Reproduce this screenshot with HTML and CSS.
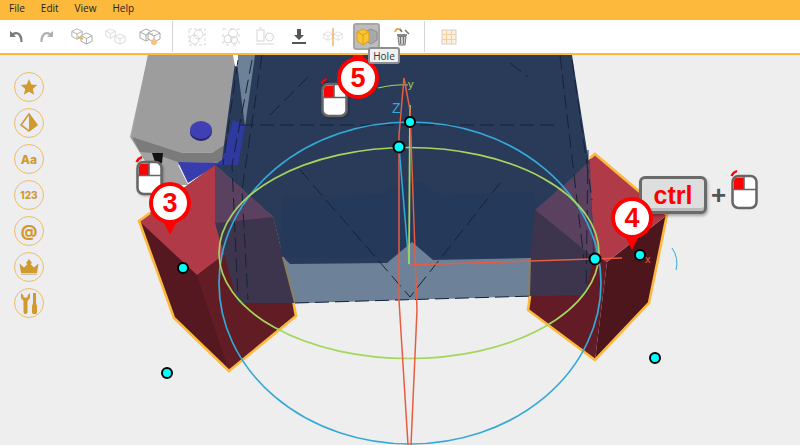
FILE: index.html
```html
<!DOCTYPE html>
<html lang="en">
<head>
    <meta charset="UTF-8">
    <meta name="viewport" content="width=device-width, initial-scale=1.0">
    <title>3D Editor</title>
    <link rel="stylesheet" href="styles.css">
</head>
<body>
    <!-- shared icons -->
    <svg class="defs" width="0" height="0">
        <symbol id="mouse" viewBox="0 0 28 40">
            <path d="M1.500 6 A9 9 0 0 1 7 1" fill="none" stroke="#f00" stroke-width="2.200"/>
            <rect x="2.500" y="6" width="24" height="32" rx="6" fill="#fff" stroke="#666" stroke-width="2.500"/>
            <path d="M4 19 V11 A4 4 0 0 1 8 7.500 H14 V19 Z" fill="#f00"/>
            <path d="M14 7 V19 M3 19.500 H26" stroke="#666" stroke-width="1.600" fill="none"/>
        </symbol>
        <symbol id="cube" viewBox="0 0 14 14">
            <path d="M1 4 L7 1 L13 4 V10 L7 13 L1 10 Z M1 4 L7 7 L13 4 M7 7 V13" fill="#fff" stroke="currentColor" stroke-width="1"/>
        </symbol>
    </svg>

    <nav class="menubar">
        <span class="menu-item">File</span>
        <span class="menu-item">Edit</span>
        <span class="menu-item">View</span>
        <span class="menu-item">Help</span>
    </nav>

    <div class="toolbar">
        <button class="tool tool-arrow">
            <svg width="18" height="18" viewBox="0 0 18 18"><path d="M3 3 V9 H9 L7 7 C10 5 13 7 13.500 14 H15.500 C16 6 11 2 5.500 5 Z" fill="#7a7a7a"/></svg>
        </button>
        <button class="tool tool-arrow">
            <svg width="18" height="18" viewBox="0 0 18 18"><path d="M15 3 V9 H9 L11 7 C8 5 5 7 4.500 14 H2.500 C2 6 7 2 12.500 5 Z" fill="#b0b0b0"/></svg>
        </button>
        <button class="tool">
            <svg class="grey" width="24" height="22" viewBox="0 0 24 22">
                <use href="#cube" x="1" y="2" width="12" height="12"/>
                <use href="#cube" x="10" y="6" width="13" height="13"/>
                <path d="M8 11 L13 13" stroke="#f3b35a" stroke-width="2"/>
            </svg>
        </button>
        <button class="tool">
            <svg class="pale" width="24" height="22" viewBox="0 0 24 22">
                <use href="#cube" x="1" y="2" width="11" height="11"/>
                <use href="#cube" x="10" y="7" width="12" height="12"/>
            </svg>
        </button>
        <button class="tool">
            <svg class="grey" width="24" height="22" viewBox="0 0 24 22">
                <use href="#cube" x="1" y="2" width="14" height="14"/>
                <use href="#cube" x="9" y="3" width="14" height="14"/>
                <circle cx="16" cy="16" r="3" fill="#f7c27c"/>
            </svg>
        </button>
        <span class="tool-sep"></span>
        <button class="tool">
            <svg class="pale" width="20" height="20" viewBox="0 0 20 20" fill="none" stroke="currentColor">
                <rect x="2" y="2" width="16" height="16" stroke-dasharray="3 2"/>
                <circle cx="11.500" cy="7.500" r="4.500"/><circle cx="7.500" cy="12.500" r="4.500"/>
            </svg>
        </button>
        <button class="tool">
            <svg class="pale" width="20" height="20" viewBox="0 0 20 20" fill="none" stroke="currentColor">
                <rect x="2" y="2" width="16" height="16" stroke-dasharray="3 4"/>
                <circle cx="12" cy="6.500" r="4.500"/><circle cx="7" cy="12" r="4"/><circle cx="13" cy="13" r="3.500"/>
            </svg>
        </button>
        <button class="tool">
            <svg class="pale" width="20" height="20" viewBox="0 0 20 20" fill="none" stroke="currentColor">
                <rect x="2" y="3" width="7" height="11"/><path d="M4 1 H7"/>
                <circle cx="14.500" cy="10" r="4"/><path d="M1 17 H19"/>
            </svg>
        </button>
        <button class="tool">
            <svg width="18" height="18" viewBox="0 0 18 18" fill="#555"><path d="M7 1 H11 V7 H14 L9 12 L4 7 H7 Z"/><rect x="2" y="14" width="14" height="2"/></svg>
        </button>
        <button class="tool">
            <svg class="pale" width="22" height="20" viewBox="0 0 22 20">
                <use href="#cube" x="1" y="4" width="10" height="10"/>
                <use href="#cube" x="11" y="4" width="10" height="10"/>
                <rect x="10.300" y="1" width="1.400" height="18" fill="#f3b35a"/>
            </svg>
        </button>
        <button class="tool tool-active">
            <svg width="22" height="20" viewBox="0 0 22 20">
                <path d="M9 5 L15 2 L21 5 V13 L15 17 L9 13 Z" fill="#a9a9a9" stroke="#8c8c8c"/>
                <path d="M1 5 L7 2 L13 5 V14 L7 18 L1 14 Z" fill="#fcc22f" stroke="#d9a122"/>
                <path d="M1 5 L7 8 L13 5 M7 8 V18" fill="none" stroke="#d9a122"/>
            </svg>
        </button>
        <button class="tool">
            <svg width="20" height="20" viewBox="0 0 20 20">
                <path d="M3 5 C4 1 8 1 9 4" fill="none" stroke="#f0a23c" stroke-width="1.800"/>
                <path d="M10 5 L8 2 M13 3 L17 7" stroke="#777" stroke-width="1.500"/>
                <rect x="5" y="7" width="10" height="2" fill="#888"/>
                <path d="M6 9.500 H14 L13 18 H7 Z M8.500 10 V17 M11.500 10 V17" fill="#ccc" stroke="#777"/>
            </svg>
        </button>
        <span class="tool-sep"></span>
        <button class="tool">
            <svg width="16" height="16" viewBox="0 0 16 16">
                <rect x="1" y="1" width="14" height="14" fill="#fdf0dc" stroke="#cfcfcf"/>
                <path d="M5.500 1 V15 M10.500 1 V15 M1 5.500 H15 M1 10.500 H15" stroke="#f3cfa0" stroke-width="1"/>
            </svg>
        </button>
    </div>

    <main class="viewport">
        <!-- the model, drawn in screen coordinates -->
        <svg class="scene" width="800" height="390" viewBox="0 55 800 390">
            <!-- grey part -->
            <path d="M148 55 H236 L228 145 L212 165 H178 L188 185 H160 L130 137 Z" fill="#a3a3a3"/>
            <path d="M148 55 H232 L235 85 L226 143 L212 152 H182 L132 137 Z" fill="#9d9d9d"/>
            <path d="M132 137 L182 153 H212 L227 143 L224 163 L178 162 L152 153 L140 152 Z" fill="#7b7b7b"/>
            <path d="M152 153 H163 L162 163 L156 165 Z" fill="#111"/>
            <path d="M178 162 L224 163 L215 166 L188 183 Z" fill="#383dae"/>
            <ellipse cx="201" cy="132" rx="11" ry="9" fill="#26266e"/>
            <ellipse cx="201" cy="130" rx="11" ry="9" fill="#4040b4"/>

            <!-- left block -->
            <path d="M139 221 L174 318 L229 371 L296 316 L293 300 L273 217 L215 165 Z" fill="#561820"/>
            <path d="M197 275 L229 371 L296 316 L293 300 L273 217 Z" fill="#621c24"/>
            <path d="M139 221 L215 165 L273 217 L197 275 Z" fill="#b03a48"/>
            <path d="M150 213 L139 221 L174 318 L229 371 L296 316 L293 300" fill="none" stroke="#fdb93c" stroke-width="2.600"/>

            <!-- right block -->
            <path d="M535 210 L528 310 L595 360 L607 262 Z" fill="#631c25"/>
            <path d="M607 262 L595 360 L649 303 L667 215 Z" fill="#4d161d"/>
            <path d="M595 154 L667 215 L607 262 L535 210 Z" fill="#b03a48"/>
            <path d="M530 296 L528 310 L595 360 L649 303 L667 215 L595 154 L590 158" fill="none" stroke="#fdb93c" stroke-width="2.600"/>

            <!-- translucent hole body -->
            <path class="body-base" d="M236 55 H572 L588 157 L595 253 L585 295 L530 296 L295 303 L283 257 L273 217 L215 165 L222 160 Z"/>
            <path class="body-lower" d="M283 197 L382 195 L402 182 H420 L440 196 L533 192 L545 258 H280 Z"/>
            <path class="body-band" d="M283 257 L290 264 L387 263 L412 242 L433 260 L530 258 L532 296 L295 303 Z"/>
            <path class="overlap-light" d="M215 165 L273 217 L215 223 Z"/>
            <path class="overlap-dark" d="M215 223 L273 217 L283 257 L295 303 L238 303 Z"/>
            <path class="overlap-light" d="M535 210 L573 177 L590 160 L593 257 Z"/>
            <path class="overlap-dark" d="M535 210 L593 257 L585 295 L530 296 L530 256 Z"/>
            <path d="M283 257 L295 303 M530 258 L529 296" stroke="#8a7f5e" stroke-width="2"/>
            <path d="M236 55 H255 L245 127 Z" fill="#6d8299"/>
            <path d="M233 120 L245 125 L238 165 L215 165 L222 160 Z" fill="#2f3aa0"/>
            <path d="M233 55 H238 L238 67 L235 66 Z" fill="#fff"/>

            <!-- dashed mesh edges -->
            <g class="mesh">
                <path d="M238 60 L223 165"/>
                <path d="M252 60 L232 165 L238 300"/>
                <path d="M262 55 L242 190 L248 300"/>
                <path d="M240 125 H560"/>
                <path d="M295 303 L535 296"/>
                <path d="M300 170 L410 297 L500 183"/>
                <path d="M270 115 L310 75"/>
                <path d="M510 63 L528 77"/>
                <path d="M560 55 L584 260"/>
                <path d="M572 60 L592 200"/>
                <path d="M588 150 L586 295"/>
            </g>

            <!-- gizmo rings -->
            <ellipse cx="410" cy="283" rx="191" ry="161" fill="none" stroke="#35a9d8" stroke-width="1.700"/>
            <ellipse cx="409" cy="253" rx="190" ry="105.500" fill="none" stroke="#a4d65e" stroke-width="1.700"/>
            <path d="M378 88 Q395 84 408 85" fill="none" stroke="#a4d65e" stroke-width="1"/>

            <!-- axes -->
            <path d="M399 147 L409 265" stroke="#35a9d8" stroke-width="1.500"/>
            <path d="M410 105 L409 264" stroke="#a4d65e" stroke-width="1.800"/>
            <path d="M408 445 L399 300 V135 L404 78 L410 110 L417 310 L411 445" fill="none" stroke="#e85c41" stroke-width="1.500"/>
            <path d="M409 265 L622 258" stroke="#e85c41" stroke-width="1.500"/>
            <path d="M672 248 Q679 258 676 270" fill="none" stroke="#35a9d8" stroke-width="1"/>
            <text class="axis axis-z" x="392" y="113">Z</text>
            <text class="axis axis-y" x="408" y="88">y</text>
            <text class="axis axis-x" x="645" y="263">x</text>

            <!-- control points -->
            <g class="handles">
                <circle cx="410" cy="122" r="5"/>
                <circle cx="399" cy="147" r="5.500"/>
                <circle cx="183" cy="268" r="5"/>
                <circle cx="167" cy="373" r="5"/>
                <circle cx="595" cy="259" r="5.500"/>
                <circle cx="640" cy="255" r="5"/>
                <circle cx="655" cy="358" r="5"/>
            </g>
        </svg>

        <aside class="side-tools">
            <button class="side-btn">
                <svg width="18" height="18" viewBox="0 0 18 18"><path d="M9 1 L11.400 6.400 L17.200 7 L12.800 10.900 L14.100 16.700 L9 13.700 L3.900 16.700 L5.200 10.900 L.800 7 L6.600 6.400 Z" fill="#d19a2e"/></svg>
            </button>
            <button class="side-btn">
                <svg width="18" height="20" viewBox="0 0 18 20"><path d="M9 1 L1 12 L9 18 L17 12 Z" fill="none" stroke="#d19a2e" stroke-width="1.600"/><path d="M9 1 L17 12 L9 18 Z" fill="#d19a2e"/></svg>
            </button>
            <button class="side-btn side-text">Aa</button>
            <button class="side-btn side-num">123</button>
            <button class="side-btn side-at">@</button>
            <button class="side-btn">
                <svg width="22" height="18" viewBox="0 0 22 18"><path d="M11 1 L14 5 L12.500 6 L16 9.500 L20.500 5.500 L19 15 H3 L1.500 5.500 L6 9.500 L9.500 6 L8 5 Z" fill="#d19a2e"/><rect x="3" y="15.500" width="16" height="1.500" fill="#c9c0a8"/></svg>
            </button>
            <button class="side-btn">
                <svg width="20" height="22" viewBox="0 0 20 22" fill="#d19a2e"><path d="M2 1 V6 L4.500 9 V20 A2 2 0 0 0 8.500 20 V9 L11 6 V1 L8.500 3.500 V5.500 H4.500 V3.500 Z"/><path d="M14 1 H17 V11 L18 14 V20 A2.500 2.500 0 0 1 13 20 V14 L14 11 Z"/></svg>
            </button>
        </aside>

        <!-- hints -->
        <svg class="hint-mouse mouse-a" width="28" height="40"><use href="#mouse"/></svg>
        <svg class="hint-mouse mouse-b" width="28" height="40"><use href="#mouse"/></svg>
        <div class="hint-combo">
            <span class="key">ctrl</span>
            <span class="plus">+</span>
            <svg width="28" height="40"><use href="#mouse"/></svg>
        </div>
        <div class="pin pin-3">3</div>
        <div class="pin pin-4">4</div>
        <div class="pin pin-5">5</div>
    </main>

    <div class="tooltip">Hole</div>
</body>
</html>
```

FILE: styles.css
```css
* {
    box-sizing: border-box;
}

body {
    margin: 0;
    display: flex;
    flex-direction: column;
    height: 445px;
    overflow: hidden;
    position: relative;
    background-color: #eeeeee;
    font-family: "Open Sans", sans-serif;
}

.defs {
    position: absolute;
}

.menubar {
    display: flex;
    align-items: center;
    height: 20px;
    padding: 0 0 4px 9px;
    gap: 16px;
    background-color: #fdb93c;
    font-size: 10px;
    color: #222;
}

.toolbar {
    display: flex;
    align-items: center;
    height: 35px;
    background-color: #fff;
    border-bottom: 2px solid #fdb93c;
}

.tool {
    display: flex;
    align-items: center;
    justify-content: center;
    width: 34px;
    height: 27px;
    padding: 0;
    border: none;
    background: none;
    color: #9a9a9a;
}

.tool-arrow {
    width: 31px;
}

.tool-arrow + .tool-arrow {
    margin-right: 3px;
}

.tool svg.grey {
    color: #a8a8a8;
}

.tool svg.pale {
    color: #d6d6d6;
}

.tool-active {
    width: 27px;
    margin: 0 5px 0 3px;
    background-color: #bdbdbd;
    border: 2px solid #a5a5a5;
    border-radius: 3px;
}

.tool-sep {
    width: 1px;
    height: 31px;
    margin: 0 7px 0 5px;
    background-color: #d5d5d5;
}

.viewport {
    position: relative;
    flex: 1;
    overflow: hidden;
}

.scene {
    display: block;
}

.body-base {
    fill: #2a3b59;
}

.body-lower {
    fill: #25395b;
}

.body-band {
    fill: #6d8299;
}

.overlap-light {
    fill: #5a4160;
}

.overlap-dark {
    fill: #3d354d;
}

.mesh path {
    fill: none;
    stroke: #152238;
    stroke-width: 1;
    stroke-dasharray: 14 6;
}

.axis {
    font-family: "Liberation Sans", sans-serif;
    font-size: 11px;
}

.axis-z {
    fill: #35a9d8;
    font-size: 14px;
}

.axis-y {
    fill: #a4d65e;
}

.axis-x {
    fill: #e85c41;
}

.handles circle {
    fill: #00ffff;
    stroke: #000;
    stroke-width: 2;
}

.side-tools {
    position: absolute;
    left: 14px;
    top: 17px;
    display: flex;
    flex-direction: column;
    gap: 6px;
}

.side-btn {
    display: flex;
    align-items: center;
    justify-content: center;
    width: 30px;
    height: 30px;
    padding: 0;
    background-color: #ebedf3;
    border: 1.500px solid #f0bd5c;
    border-radius: 50%;
    color: #d19a2e;
    font-family: "Inter", sans-serif;
    font-weight: 800;
}

.side-text {
    font-size: 12px;
}

.side-num {
    font-size: 10px;
}

.side-at {
    font-size: 16px;
}

.hint-mouse {
    position: absolute;
    filter: drop-shadow(1px 1px 1px rgba(0, 0, 0, .25));
}

.mouse-a {
    left: 135px;
    top: 101px;
}

.mouse-b {
    left: 320px;
    top: 23px;
}

.hint-combo {
    position: absolute;
    left: 639px;
    top: 115px;
    display: flex;
    align-items: flex-start;
}

.key {
    display: flex;
    align-items: center;
    justify-content: center;
    width: 68px;
    height: 38px;
    margin-top: 6px;
    background-color: #dedede;
    border: 3px solid #6a6a6a;
    border-radius: 6px;
    box-shadow: inset 0 -3px 0 #bcbcbc, 1px 2px 3px rgba(0, 0, 0, .3);
    color: #f00;
    font-family: "Liberation Sans", sans-serif;
    font-weight: 700;
    font-size: 25px;
}

.plus {
    width: 23px;
    margin-top: 6px;
    text-align: center;
    color: #555;
    font-family: "Liberation Sans", sans-serif;
    font-weight: 700;
    font-size: 26px;
    line-height: 38px;
}

.pin {
    position: absolute;
    width: 42px;
    height: 42px;
    display: flex;
    align-items: center;
    justify-content: center;
    background-color: #fff;
    border: 4px solid #f00;
    border-radius: 50%;
    color: #f00;
    font-family: "Liberation Sans", sans-serif;
    font-weight: 700;
    font-size: 27px;
}

.pin::after {
    content: "";
    position: absolute;
    left: 50%;
    margin-left: -7px;
    border-left: 7px solid transparent;
    border-right: 7px solid transparent;
}

.pin-3 {
    left: 149px;
    top: 127px;
}

.pin-4 {
    left: 611px;
    top: 142px;
}

.pin-3::after, .pin-4::after {
    top: 35px;
    border-top: 14px solid #f00;
}

.pin-5 {
    left: 337px;
    top: 2px;
}

.pin-5::after {
    bottom: 35px;
    border-bottom: 14px solid #f00;
}

.tooltip {
    position: absolute;
    left: 368px;
    top: 47px;
    width: 32px;
    height: 17px;
    display: flex;
    align-items: center;
    justify-content: center;
    background-color: #eef0f4;
    border: 2px solid #8f8f8f;
    border-radius: 3px;
    color: #333;
    font-size: 10px;
}
```
